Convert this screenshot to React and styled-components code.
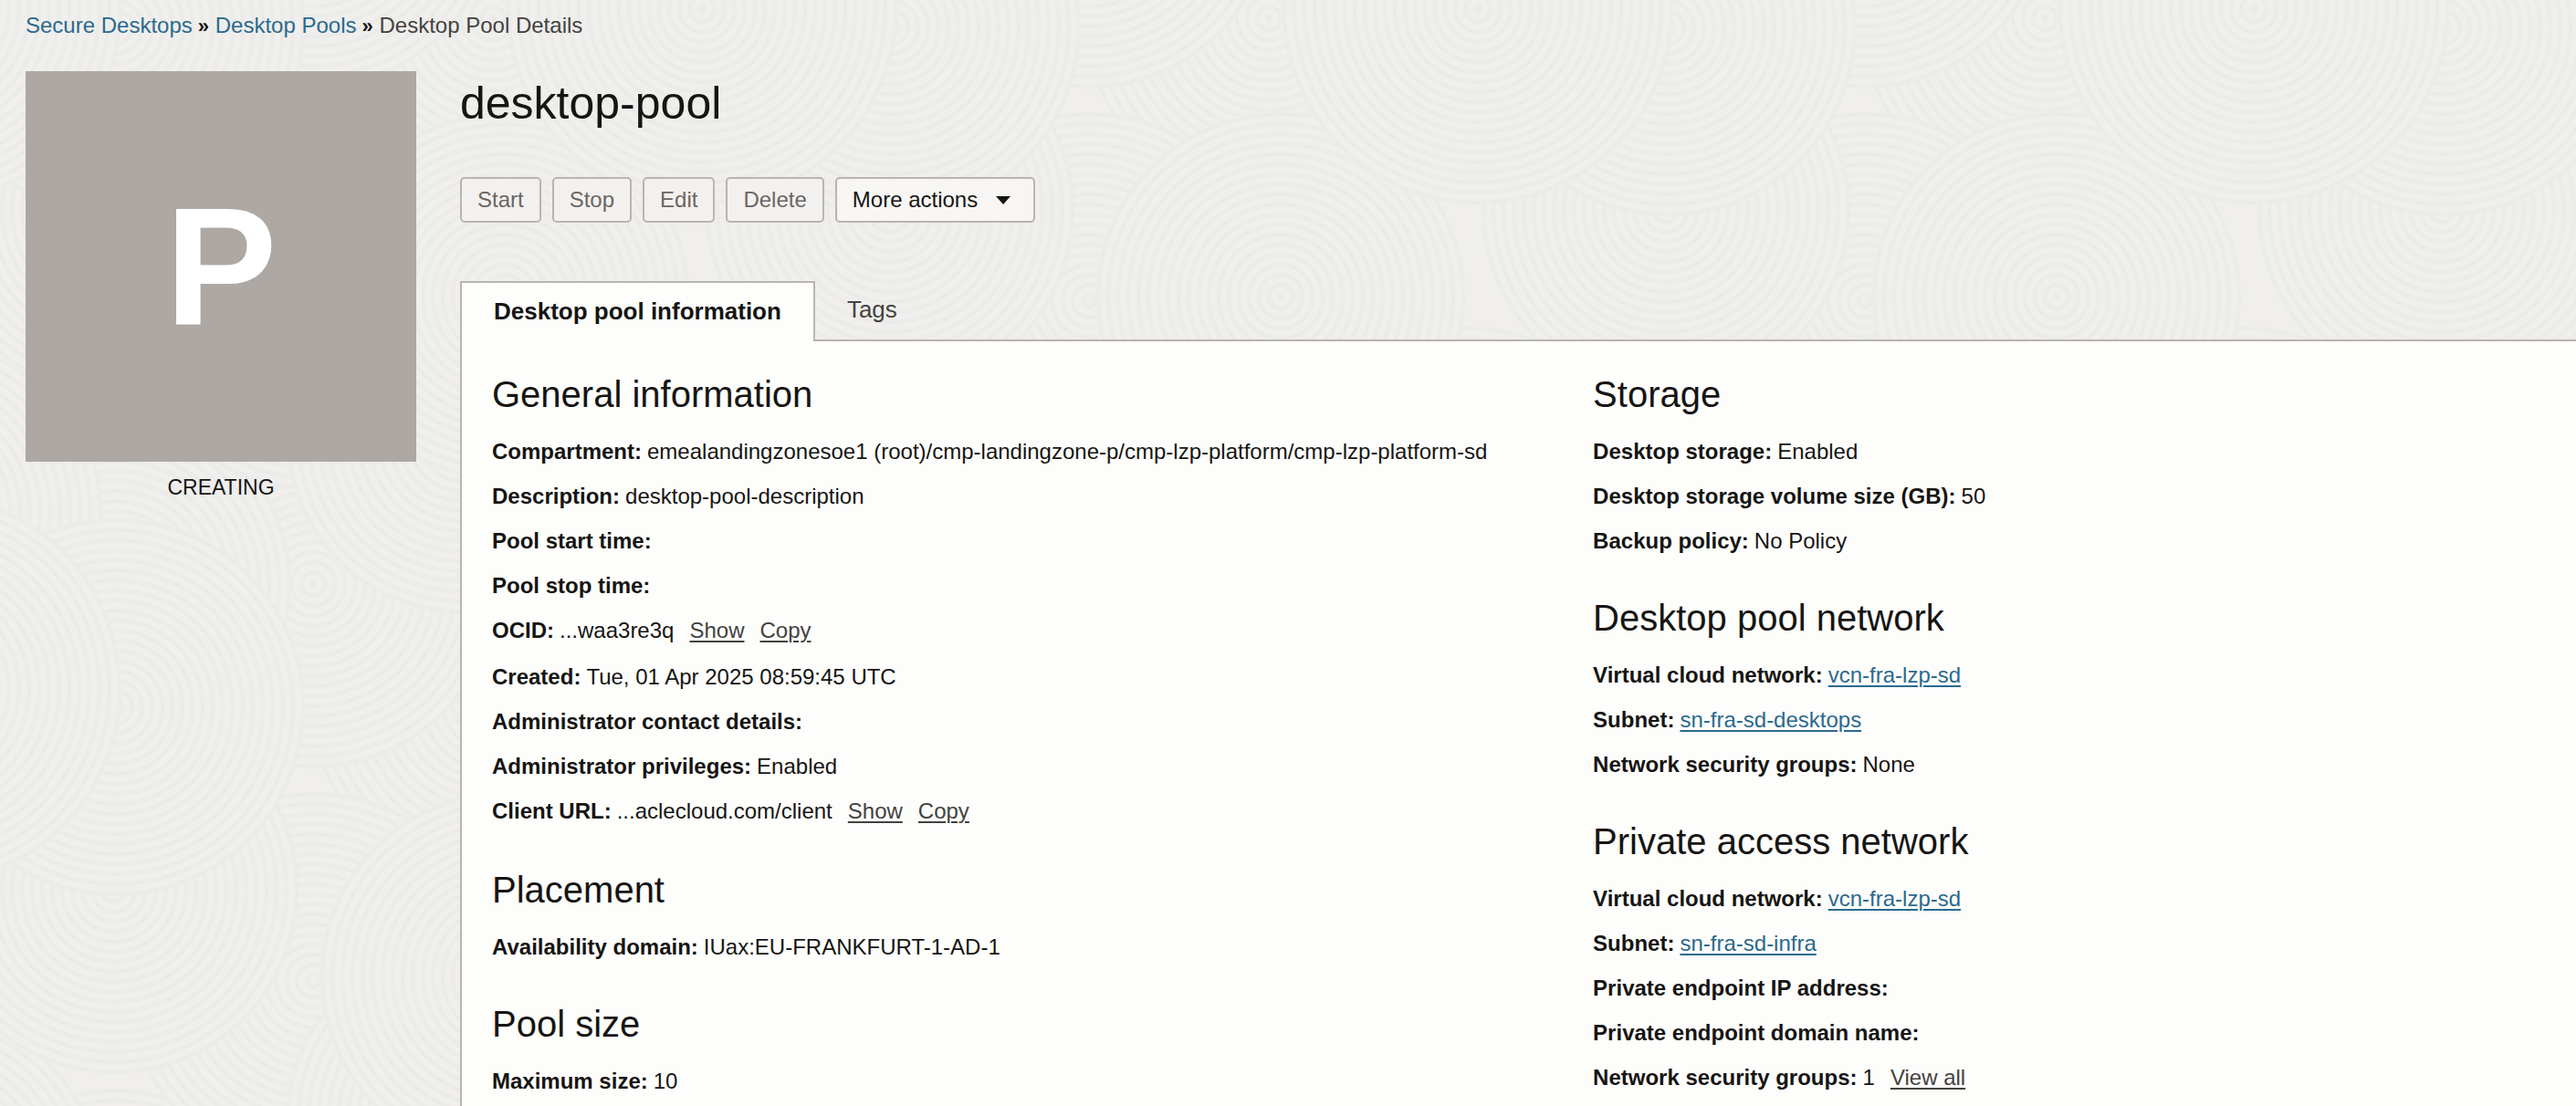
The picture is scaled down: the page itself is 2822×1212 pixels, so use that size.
import React from "react";
import styled, { createGlobalStyle, css } from "styled-components";

const color = {
  page: "#f0efed",
  ripple: "#ebebe9",
  panel: "#fdfdfb",
  text: "#161513",
  muted: "#444240",
  disabled: "#6a6662",
  link: "#2b698e",
  border: "#bab4af",
  tile: "#ada8a3",
};

const GlobalStyle = createGlobalStyle`
  *, *::before, *::after { box-sizing: border-box; }
  body {
    margin: 0;
    background: ${color.page};
    color: ${color.text};
    font-family: "Liberation Sans", Arial, Helvetica, sans-serif;
    font-size: 24px;
    line-height: 28px;
  }
`;

const Page = styled.div`
  position: relative;
  isolation: isolate;
  display: flex;
  flex-direction: column;
  gap: 36px;
  min-height: 100vh;
  padding: 14px 0 0 28px;
`;

const Backdrop = styled.svg`
  position: absolute;
  inset: 0;
  z-index: -1;
  width: 100%;
  height: 100%;
`;

const Crumbs = styled.ol`
  display: flex;
  align-items: baseline;
  gap: 6px;
  margin: 0;
  padding: 0;
  list-style: none;
`;

const Crumb = styled.li`
  display: flex;
  align-items: baseline;
  gap: 6px;
  color: ${color.muted};
`;

const CrumbLink = styled.a`
  color: ${color.link};
  text-decoration: none;
`;

const Chevron = styled.span`
  width: 13px;
  color: ${color.text};
  font-size: 22px;
  font-weight: 700;
  line-height: 1;
`;

const Layout = styled.div`
  display: flex;
  flex: 1;
  gap: 48px;
`;

const Aside = styled.aside`
  flex: none;
  width: 428px;
`;

const StatusTile = styled.div`
  display: grid;
  place-items: center;
  aspect-ratio: 1;
  background: ${color.tile};
  color: #fff;
  font-size: 184px;
  font-weight: 700;
  line-height: 1;
`;

const StatusText = styled.p`
  margin: 14px 0 0;
  font-size: 23px;
  text-align: center;
`;

const Main = styled.main`
  display: flex;
  flex: 1;
  flex-direction: column;
  min-width: 0;
`;

const Title = styled.h1`
  margin: 0 0 46px;
  font-size: 50px;
  font-weight: 400;
  line-height: 70px;
`;

const Toolbar = styled.div`
  display: flex;
  flex-wrap: wrap;
  gap: 12px;
  margin-bottom: 64px;
`;

const ActionButton = styled.button`
  display: flex;
  align-items: center;
  gap: 20px;
  height: 50px;
  padding: 0 17px;
  border: 2px solid ${color.border};
  border-radius: 5px;
  background: #f7f6f4;
  color: ${color.text};
  font: inherit;

  &:disabled {
    background: #f3f1ef;
    color: ${color.disabled};
  }
`;

const Caret = styled.svg`
  width: 16px;
  height: 9px;
  margin-right: 8px;
`;

const Tabs = styled.div`
  display: flex;

  &::after {
    content: "";
    flex: 1;
    border-bottom: 2px solid ${color.border};
  }
`;

const Tab = styled.button`
  height: 66px;
  padding: 0 35px 2px;
  border: 0 solid ${color.border};
  border-bottom-width: 2px;
  background: transparent;
  color: ${color.muted};
  font: inherit;
  font-size: 26px;

  ${({ $active }) =>
    $active &&
    css`
      border-width: 2px 2px 0;
      background: ${color.panel};
      color: ${color.text};
      font-weight: 700;
    `}
`;

const Panel = styled.div`
  display: grid;
  flex: 1;
  grid-template-columns: 28fr 25fr;
  padding: 34px 0 0 33px;
  border-left: 2px solid ${color.border};
  background: ${color.panel};
`;

const Column = styled.div`
  display: flex;
  flex-direction: column;
  gap: 36px;
  min-width: 0;
`;

const SectionTitle = styled.h2`
  margin: 0 0 14px;
  font-size: 40px;
  font-weight: 400;
  line-height: 48px;
`;

const Fields = styled.dl`
  margin: 0;
`;

const Row = styled.div`
  display: flex;
  align-items: baseline;
  gap: 6px;
  padding-bottom: ${({ $tall }) => ($tall ? "2px" : "0")};
  line-height: 49px;
`;

const Label = styled.dt`
  font-weight: 700;
`;

const Value = styled.dd`
  display: flex;
  gap: 17px;
  margin: 0;
`;

const underlined = css`
  text-decoration: underline;
  text-decoration-thickness: 2px;
  text-underline-offset: 3px;
`;

const ValueLink = styled.a`
  color: ${color.link};
  ${underlined}
`;

const TextButton = styled.button`
  padding: 0;
  border: 0;
  background: none;
  color: ${color.muted};
  font: inherit;
  ${underlined}
`;

const TILE_W = 850;
const TILE_H = 745;
const RING_GAP = 11;
const DISCS = [
  [540, 20, 200],
  [343, 640, 200],
  [127, 640, 190],
  [343, 330, 205],
  [760, 560, 200],
  [506, 480, 190],
  [125, 230, 200],
  [553, 325, 200],
  [127, 30, 205],
  [769, 10, 212],
];

function Ripples() {
  const copies = [];
  DISCS.forEach(([cx, cy, r], i) => {
    [-TILE_W, 0, TILE_W].forEach((dx) => {
      [-TILE_H, 0, TILE_H].forEach((dy) => {
        const x = cx + dx;
        const y = cy + dy;
        const visible =
          x + r > 0 && x - r < TILE_W && y + r > 0 && y - r < TILE_H;
        if (visible) copies.push({ key: `${i}:${dx}:${dy}`, x, y, r });
      });
    });
  });

  return (
    <Backdrop aria-hidden="true">
      <defs>
        <pattern
          id="ripples"
          width={TILE_W}
          height={TILE_H}
          patternUnits="userSpaceOnUse"
        >
          {copies.map(({ key, x, y, r }) => (
            <g key={key} fill="none" stroke={color.ripple} strokeWidth="4">
              <circle cx={x} cy={y} r={r} fill={color.page} />
              {Array.from({ length: Math.floor(r / RING_GAP) }, (_, n) => (
                <circle key={n} cx={x} cy={y} r={r - RING_GAP * (n + 1)} />
              ))}
            </g>
          ))}
        </pattern>
      </defs>
      <rect width="100%" height="100%" fill="url(#ripples)" />
    </Backdrop>
  );
}

function Field({ label, value, href, actions }) {
  return (
    <Row $tall={Boolean(actions && actions.length > 1)}>
      <Label>{label}:</Label>
      <Value>
        {href ? <ValueLink href={href}>{value}</ValueLink> : value}
        {actions &&
          actions.map((name) => (
            <TextButton key={name} type="button">
              {name}
            </TextButton>
          ))}
      </Value>
    </Row>
  );
}

const COLUMNS = [
  [
    {
      title: "General information",
      fields: [
        {
          label: "Compartment",
          value:
            "emealandingzonesoe1 (root)/cmp-landingzone-p/cmp-lzp-platform/cmp-lzp-platform-sd",
        },
        { label: "Description", value: "desktop-pool-description" },
        { label: "Pool start time" },
        { label: "Pool stop time" },
        { label: "OCID", value: "...waa3re3q", actions: ["Show", "Copy"] },
        { label: "Created", value: "Tue, 01 Apr 2025 08:59:45 UTC" },
        { label: "Administrator contact details" },
        { label: "Administrator privileges", value: "Enabled" },
        {
          label: "Client URL",
          value: "...aclecloud.com/client",
          actions: ["Show", "Copy"],
        },
      ],
    },
    {
      title: "Placement",
      fields: [
        { label: "Availability domain", value: "IUax:EU-FRANKFURT-1-AD-1" },
      ],
    },
    { title: "Pool size", fields: [{ label: "Maximum size", value: "10" }] },
  ],
  [
    {
      title: "Storage",
      fields: [
        { label: "Desktop storage", value: "Enabled" },
        { label: "Desktop storage volume size (GB)", value: "50" },
        { label: "Backup policy", value: "No Policy" },
      ],
    },
    {
      title: "Desktop pool network",
      fields: [
        {
          label: "Virtual cloud network",
          value: "vcn-fra-lzp-sd",
          href: "#vcn",
        },
        { label: "Subnet", value: "sn-fra-sd-desktops", href: "#subnet" },
        { label: "Network security groups", value: "None" },
      ],
    },
    {
      title: "Private access network",
      fields: [
        {
          label: "Virtual cloud network",
          value: "vcn-fra-lzp-sd",
          href: "#vcn",
        },
        { label: "Subnet", value: "sn-fra-sd-infra", href: "#subnet-infra" },
        { label: "Private endpoint IP address" },
        { label: "Private endpoint domain name" },
        {
          label: "Network security groups",
          value: "1",
          actions: ["View all"],
        },
      ],
    },
  ],
];

export default function App() {
  return (
    <>
      <GlobalStyle />
      <Page>
        <Ripples />
        <nav aria-label="Breadcrumb">
          <Crumbs>
            <Crumb>
              <CrumbLink href="#secure-desktops">Secure Desktops</CrumbLink>
              <Chevron aria-hidden="true">»</Chevron>
            </Crumb>
            <Crumb>
              <CrumbLink href="#desktop-pools">Desktop Pools</CrumbLink>
              <Chevron aria-hidden="true">»</Chevron>
            </Crumb>
            <Crumb aria-current="page">Desktop Pool Details</Crumb>
          </Crumbs>
        </nav>
        <Layout>
          <Aside>
            <StatusTile aria-hidden="true">P</StatusTile>
            <StatusText>CREATING</StatusText>
          </Aside>
          <Main>
            <Title>desktop-pool</Title>
            <Toolbar>
              {["Start", "Stop", "Edit", "Delete"].map((name) => (
                <ActionButton key={name} type="button" disabled>
                  {name}
                </ActionButton>
              ))}
              <ActionButton type="button" aria-haspopup="menu">
                More actions
                <Caret viewBox="0 0 16 9" aria-hidden="true">
                  <path d="M0 0h16L8 9z" fill="currentColor" />
                </Caret>
              </ActionButton>
            </Toolbar>
            <Tabs role="tablist">
              <Tab
                id="tab-info"
                type="button"
                role="tab"
                aria-selected="true"
                aria-controls="panel-info"
                $active
              >
                Desktop pool information
              </Tab>
              <Tab type="button" role="tab" aria-selected="false">
                Tags
              </Tab>
            </Tabs>
            <Panel id="panel-info" role="tabpanel" aria-labelledby="tab-info">
              {COLUMNS.map((sections, i) => (
                <Column key={i}>
                  {sections.map(({ title, fields }) => (
                    <section key={title}>
                      <SectionTitle>{title}</SectionTitle>
                      <Fields>
                        {fields.map((field) => (
                          <Field key={field.label} {...field} />
                        ))}
                      </Fields>
                    </section>
                  ))}
                </Column>
              ))}
            </Panel>
          </Main>
        </Layout>
      </Page>
    </>
  );
}
